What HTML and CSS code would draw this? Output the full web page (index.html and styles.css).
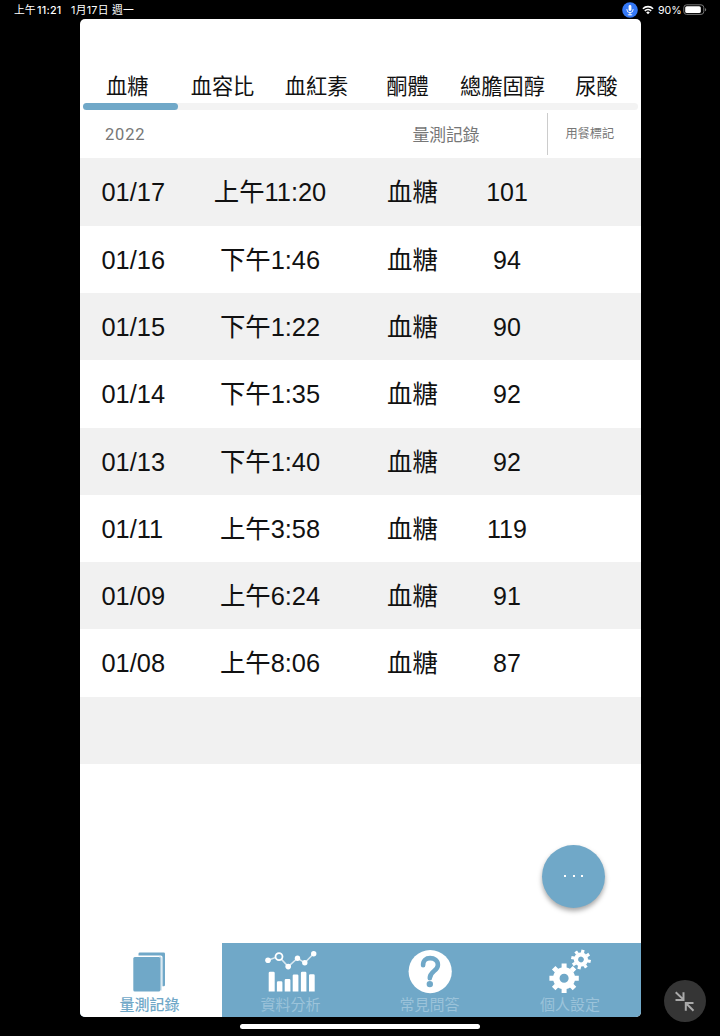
FILE: index.html
```
<!DOCTYPE html>
<html lang="zh-Hant">
<head>
  <meta charset="UTF-8" />
  <meta name="viewport" content="width=device-width, initial-scale=1.0"/>
  <title>血糖</title>
  <link rel="stylesheet" href="styles.css">
</head>
<body>
  <div class="status">
    <span class="clock">上午<b>11:21</b></span>
    <span class="day">1月17日 週一</span>
    <div class="status-right">
      <svg class="mic" width="16" height="16" viewBox="0 0 16 16">
        <circle cx="8" cy="8" r="7.8" fill="#3478f6"/>
        <rect x="6.6" y="3" width="2.8" height="6" rx="1.4" fill="#fff"/>
        <path d="M4.8 7.5a3.2 3.2 0 0 0 6.4 0M8 10.7v2.1M6.2 12.8h3.6" fill="none" stroke="#fff" stroke-width=".9" stroke-linecap="round"/>
      </svg>
      <svg class="wifi" width="12" height="10" viewBox="0 0 12 10">
        <path d="M.9 3.7a7.3 7.3 0 0 1 10.2 0M2.8 5.9a4.6 4.6 0 0 1 6.4 0" fill="none" stroke="#fff" stroke-width="1.6"/>
        <path d="M4.2 7.4a2.6 2.6 0 0 1 3.6 0L6 9.3z" fill="#fff"/>
      </svg>
      <span class="percent">90%</span>
      <svg width="24" height="12" viewBox="0 0 24 12">
        <rect x=".8" y=".8" width="20" height="9.6" rx="2.8" fill="none" stroke="#777" stroke-width="1"/>
        <rect x="2.2" y="2.2" width="15.6" height="6.8" rx="1.6" fill="#fff"/>
        <path d="M22 4.1v3.2q1.2-.5 1.2-1.6T22 4.1z" fill="#777"/>
      </svg>
    </div>
  </div>

  <div class="app">
    <div class="tabs">
      <span>血糖</span><span>血容比</span><span>血紅素</span><span>酮體</span><span>總膽固醇</span><span>尿酸</span>
    </div>
    <div class="track"><div class="thumb"></div></div>

    <div class="head">
      <span class="year">2022</span>
      <span class="record">量測記錄</span>
      <span class="meal">用餐標記</span>
    </div>

    <div class="list">
      <div class="row"><span>01/17</span><span>上午11:20</span><span>血糖</span><span>101</span></div>
      <div class="row"><span>01/16</span><span>下午1:46</span><span>血糖</span><span>94</span></div>
      <div class="row"><span>01/15</span><span>下午1:22</span><span>血糖</span><span>90</span></div>
      <div class="row"><span>01/14</span><span>下午1:35</span><span>血糖</span><span>92</span></div>
      <div class="row"><span>01/13</span><span>下午1:40</span><span>血糖</span><span>92</span></div>
      <div class="row"><span>01/11</span><span>上午3:58</span><span>血糖</span><span>119</span></div>
      <div class="row"><span>01/09</span><span>上午6:24</span><span>血糖</span><span>91</span></div>
      <div class="row"><span>01/08</span><span>上午8:06</span><span>血糖</span><span>87</span></div>
      <div class="row"></div>
    </div>

    <div class="nav">
      <div class="item active">
        <svg width="60" height="44" viewBox="0 0 60 44">
          <path d="M18.5 2.8q0-1.3 1.3-1.3h23.9q1.3 0 1.3 1.3v31.2q0 1.2-1.3 1.2h-1.2V6q0-1.6-1.6-1.6H18.5z" fill="#70a8c8"/>
          <path d="M39.5 5.3q2 .2 2 1.7v32.5h-2z" fill="#b5d2e3"/>
          <rect x="13.3" y="6" width="26.9" height="34.5" rx="1.5" fill="#70a8c8"/>
        </svg>
        <span>量測記錄</span>
      </div>
      <div class="item">
        <svg width="60" height="44" viewBox="0 0 60 44">
          <path d="M7 9.2L17.8 5.4l9.4 10.2 9.3-8.3 7.3 4.5 9-9.3" fill="none" stroke="#d7e7f0" stroke-width="1.5"/>
          <g fill="#fff">
            <circle cx="7" cy="9.2" r="2.8"/><circle cx="27.2" cy="15.6" r="2.8"/><circle cx="36.5" cy="7.3" r="2.7"/>
            <circle cx="43.8" cy="11.8" r="2.7"/><circle cx="52.7" cy="2.7" r="2.7"/>
            <path d="M7.7 22q0-1.3 1.3-1.3h3.4q1.3 0 1.3 1.3v18.6h-6zM15.9 31.5q0-1.2 1.2-1.2h3.1q1.2 0 1.2 1.2v9.1h-5.5zM23.7 29.2q0-1.2 1.2-1.2h3.3q1.2 0 1.2 1.2v11.4h-5.7zM31.7 24.6q0-1.2 1.2-1.2h3.3q1.2 0 1.2 1.2v16h-5.7zM39.9 22q0-1.2 1.2-1.2h3.1q1.2 0 1.2 1.2v18.6h-5.5zM48 24.5q0-1.2 1.2-1.2h3.3q1.2 0 1.2 1.2v16.1H48z"/>
          </g>
          <circle cx="18" cy="5.6" r="3.5" fill="#70a8c8" stroke="#fff" stroke-width="1.8"/>
        </svg>
        <span>資料分析</span>
      </div>
      <div class="item">
        <svg width="60" height="44" viewBox="0 0 60 44">
          <circle cx="30.2" cy="20.6" r="21.6" fill="#fff"/>
          <path d="M23.1 14.2C23 9.3 26 7.1 30.1 7.1s7.8 2.5 7.8 6.8c0 6.2-8.1 6.1-8.1 13.3" fill="none" stroke="#70a8c8" stroke-width="4.6" stroke-linecap="round"/>
          <circle cx="29.8" cy="33.1" r="3.2" fill="#70a8c8"/>
        </svg>
        <span>常見問答</span>
      </div>
      <div class="item">
        <svg width="60" height="44" viewBox="0 0 60 44">
          <g transform="translate(24.1 27.2)" stroke="#fff">
            <circle r="7.8" fill="none" stroke-width="6.5"/>
            <path d="M0-10v-4.7M0 10v4.7M-10 0h-4.7M10 0h4.7M-7.4-7.4l-3 -3M7.4-7.4l3 -3M-7.4 7.4l-3 3M7.4 7.4l3 3" stroke-width="5"/>
          </g>
          <g transform="translate(41 8.5) rotate(12)" stroke="#fff">
            <circle r="5" fill="none" stroke-width="4.2"/>
            <path d="M0-6v-3.9M0 6v3.9M-6 0h-3.9M6 0h3.9M-4.7-4.7l-2.2-2.2M4.7-4.7l2.2-2.2M-4.7 4.7l-2.2 2.2M4.7 4.7l2.2 2.2" stroke-width="3.2"/>
          </g>
        </svg>
        <span>個人設定</span>
      </div>
    </div>
  </div>

  <div class="fab"><i></i><i></i><i></i></div>
  <div class="home"></div>
  <div class="shrink">
    <svg width="42" height="42" viewBox="0 0 42 42">
      <path d="M11.7 12.2l7.5 7.2M19.5 12.3V20h-8M29.5 30.7L22 23.2M21.8 30.7v-7.8h7.7" fill="none" stroke="#aaa" stroke-width="2"/>
    </svg>
  </div>
</body>
</html>
```

FILE: styles.css
```
* { box-sizing: border-box; }
body { margin: 0; height: 1036px; background: #000; overflow: hidden; font-family: "Liberation Sans", "Noto Sans CJK TC", sans-serif; position: relative; }

.status { display: flex; align-items: center; height: 19.4px; padding: 1px 13px 0 14px; color: #fff; font: 10.8px/19px Inter, "Noto Sans CJK TC", sans-serif; white-space: nowrap; }
.clock { width: 57px; }
.clock b { font-weight: 500; margin-left: 1.5px; letter-spacing: .2px; }
.day { letter-spacing: .25px; }
.status-right { display: flex; align-items: center; margin-left: auto; }
.wifi { margin: 0 4px; }
.percent { width: 25px; font-size: 10.6px; }

.app { display: flex; flex-direction: column; width: 561px; height: 997.5px; margin-left: 79.5px; background: #fff; border-radius: 5px; overflow: hidden; }
.tabs { display: grid; grid-template-columns: 95.5px 95px 93px 89px 101px 87px; height: 83.5px; padding-top: 51px; font: 21.2px/30px "Noto Sans CJK TC", sans-serif; color: #111; text-align: center; white-space: nowrap; }
.track { height: 7.5px; margin: 0 3px; background: #f3f3f3; border-radius: 4px; }
.thumb { width: 95.5px; height: 100%; background: #70a8c8; border-radius: 4px; }

.head { display: flex; align-items: center; height: 48px; padding-left: 25.5px; color: #777; font-family: "Noto Sans CJK TC", sans-serif; }
.year { width: 274px; font: 16.5px Roboto, sans-serif; letter-spacing: .8px; }
.record { width: 134px; margin-top: -1px; text-align: center; font-size: 16.8px; }
.meal { flex: 1; height: 42px; margin-left: 34px; border-left: 1px solid #ccc; text-align: center; font-size: 12.2px; line-height: 41px; padding-right: 9px; }

.row { display: grid; grid-template-columns: 110.5px 160px 125px 64px; height: 67.3px; font-size: 25.4px; line-height: 69px; color: #111; text-align: center; white-space: nowrap; }
.row:nth-child(odd) { background: #f1f1f1; }
.row span:first-child { padding-left: 22px; text-align: left; }
.row span:last-child { font-size: 25px; line-height: 68px; }

.nav { display: grid; grid-template-columns: 142px 138px 140px 141px; height: 73.8px; margin-top: auto; background: #70a8c8; }
.item { display: flex; flex-direction: column; align-items: center; padding-top: 7.5px; color: #9bc3da; font: 15px/18px "Noto Sans CJK TC", sans-serif; }
.item svg { overflow: visible; flex: none; }
.item.active { background: #fff; color: #70a8c8; padding-right: 2px; font-weight: 500; }

.fab { position: absolute; left: 542px; top: 844.5px; width: 63px; height: 63px; border-radius: 50%; background: #70a8c8; box-shadow: 0 3px 5px rgba(0,0,0,.35); display: flex; justify-content: center; align-items: center; gap: 6.5px; }
.fab i { width: 2px; height: 2px; background: #fff; }
.home { width: 240px; height: 5px; margin: 7px auto 0; border-radius: 3px; background: #fff; }
.shrink { position: absolute; left: 664px; top: 980px; width: 42px; height: 42px; border-radius: 50%; background: #353535; }
```
